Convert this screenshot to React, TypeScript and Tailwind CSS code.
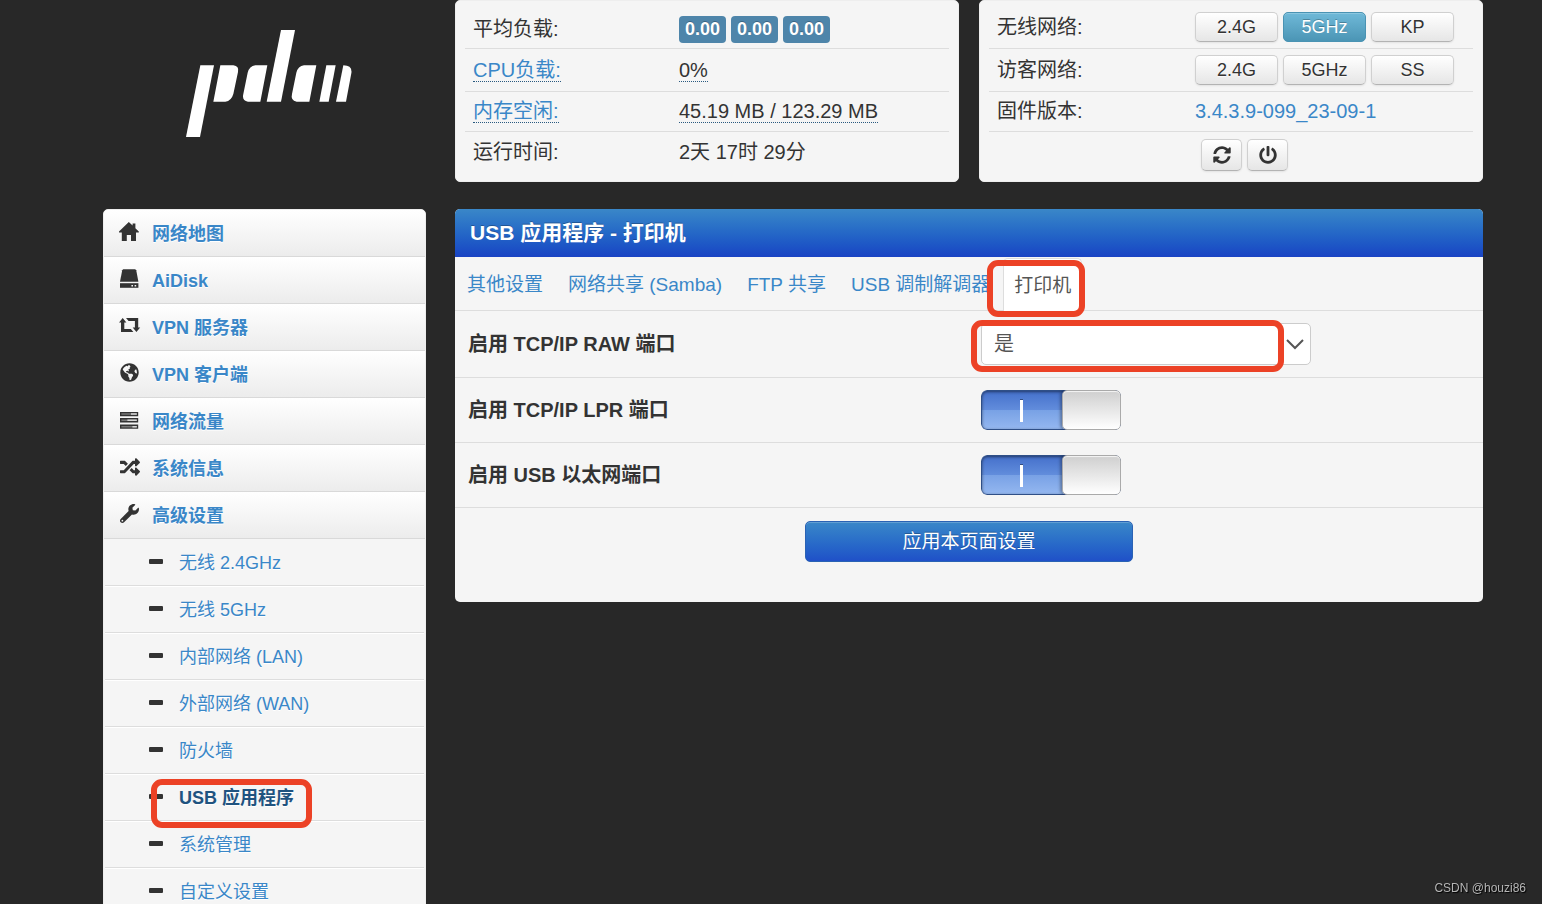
import { useState } from "react"
import type { ReactNode } from "react"
import { FaGlobeAmericas, FaPowerOff, FaRandom, FaSyncAlt, FaWrench } from "react-icons/fa"

interface MenuItem {
  label: string
  icon: ReactNode
}

function HomeIcon() {
  return (
    <svg width="20" height="20" viewBox="0 0 20 20" fill="currentColor">
      <path d="M9.8 0 L13.6 3.6 V1.4 H16.4 V6.2 L19.8 9.6 V10.4 H17 V19 H12 V13 H7.8 V19 H2.8 V10.4 H0 V9.6 Z" />
    </svg>
  )
}

function DiskIcon() {
  return (
    <svg width="20" height="20" viewBox="0 0 20 20" fill="currentColor">
      <path d="M4.2 0.3 H16.2 L17.2 1.2 L19.4 12.8 H1 L3.2 1.2 Z" />
      <path d="M1 14.2 H19.4 V18.8 H1 Z" />
      <path d="M12.4 16 h1.6 v1.4 h-1.6 z M15.6 16 h1.6 v1.4 h-1.6 z" fill="#f5f5f5" />
    </svg>
  )
}

function RetweetIcon() {
  return (
    <svg width="22" height="20" viewBox="0 0 22 20" fill="currentColor">
      <path d="M3.7 2 L7.4 6.6 H5.3 V12.9 H11.8 L14.4 16 H2 V6.6 H0 Z" />
      <path d="M17.4 16 L13.7 11.4 H15.9 V5.1 H9.6 L7 2 H19.2 V11.4 H21.2 Z" />
    </svg>
  )
}

function TasksIcon() {
  return (
    <svg width="20" height="20" viewBox="0 0 20 20">
      <path d="M1 2 H19.2 V6.2 H1 Z M1 8 H19.2 V12.4 H1 Z M1 14.4 H19.2 V18.8 H1 Z" fill="currentColor" />
      <path d="M2.4 3.3 H17.8 V4.8 H2.4 Z M2.4 9.4 H17.8 V10.9 H2.4 Z M2.4 15.9 H17.8 V17.4 H2.4 Z" fill="#777" />
      <path d="M12 3.3 H17.8 V4.8 H12 Z M8.4 9.4 H17.8 V10.9 H8.4 Z M13.4 15.9 H17.8 V17.4 H13.4 Z" fill="#d5d5d5" />
    </svg>
  )
}

function Logo() {
  return (
    <svg className="h-[107px] w-[166px]" viewBox="48 30 498 321" fill="#fff" role="img" aria-label="pdcn">
      <path d="M91 136 H132 L90 351 H48 Z" />
      <path d="M151 136 H190 Q208 138 204 156 L190 222 Q184 243 166 245 H130 Z" />
      <path d="M256 136 H292 L271 245 H234 Q215 241 220 222 L233 158 Q238 139 256 136 Z" />
      <path d="M333 30 H375 L333 245 H290 Z" />
      <path d="M402 136 H439 L418 245 H380 Q361 241 366 222 L379 158 Q384 139 402 136 Z" />
      <path d="M469 136 H497 L476 245 H448 Z" />
      <path d="M520 136 Q548 136 544 160 L528 245 H498 Z" />
    </svg>
  )
}

const menu: MenuItem[] = [
  { label: "网络地图", icon: <HomeIcon /> },
  { label: "AiDisk", icon: <DiskIcon /> },
  { label: "VPN 服务器", icon: <RetweetIcon /> },
  { label: "VPN 客户端", icon: <FaGlobeAmericas className="ml-px size-[19px]" /> },
  { label: "网络流量", icon: <TasksIcon /> },
  { label: "系统信息", icon: <FaRandom className="ml-px size-5" /> },
  { label: "高级设置", icon: <FaWrench className="ml-px size-[19px]" /> },
]

const subMenu = [
  "无线 2.4GHz",
  "无线 5GHz",
  "内部网络 (LAN)",
  "外部网络 (WAN)",
  "防火墙",
  "USB 应用程序",
  "系统管理",
  "自定义设置",
]

const tabs = ["其他设置", "网络共享 (Samba)", "FTP 共享", "USB 调制解调器", "打印机"]

const cardClass = "rounded-[5px] border border-[#eee] bg-[#f5f5f5] px-[9px]"
const labelClass = "pl-2 text-left font-normal"
const buttonClass =
  "rounded-[5px] border border-[#d0d0d0] border-b-[#b3b3b3] bg-linear-to-b from-white to-[#e6e6e6] shadow-[0_1px_2px_rgba(0,0,0,0.08)] [text-shadow:0_1px_1px_rgba(255,255,255,0.75)]"

function RadioButton({ label, active = false }: { label: string; active?: boolean }) {
  return (
    <button
      type="button"
      className={
        active
          ? "h-[30px] w-[83px] rounded-[5px] border border-[#4a93b3] bg-linear-to-b from-[#6fb9d8] to-[#4b95b5] text-lg leading-none text-white shadow-[inset_0_1px_0_rgba(255,255,255,0.2)] [text-shadow:0_-1px_0_rgba(0,0,0,0.25)]"
          : `${buttonClass} h-[30px] w-[83px] text-lg leading-none`
      }
    >
      {label}
    </button>
  )
}

function Toggle({ id }: { id: string }) {
  const [on, setOn] = useState(true)

  return (
    <div className="relative h-10 w-[140px] overflow-hidden rounded-md">
      <input
        id={id}
        type="checkbox"
        checked={on}
        onChange={(e) => setOn(e.target.checked)}
        className="peer block h-10 w-[140px] cursor-pointer appearance-none rounded-md border border-[#999] bg-[#ddd] shadow-[inset_0_1px_3px_rgba(0,0,0,0.5)] checked:border-[#2f4f87] checked:bg-[linear-gradient(#4470cb,#628ddc_50%,#78a1e5_50%,#94b7f0)]"
      />
      <span className="pointer-events-none absolute top-0 left-0 h-10 w-[59px] rounded-[5px] border border-[#aaa] bg-linear-to-b from-[#cfcfcf] to-white shadow-[inset_0_1px_1px_rgba(255,255,255,0.8),-2px_0_3px_rgba(0,0,0,0.3)] peer-checked:left-[81px]"></span>
      {on && <span className="pointer-events-none absolute top-[10px] left-[39px] h-[22px] w-[3px] bg-white shadow-[0_-1px_0_rgba(0,0,0,0.4)]"></span>}
    </div>
  )
}

export default function App() {
  const [rawPort, setRawPort] = useState("1")

  return (
    <div className="h-screen overflow-hidden bg-[#282828] pr-[59px] pl-[103px] font-['Liberation_Sans','Noto_Sans_CJK_SC',sans-serif] text-[20px] leading-6 text-[#333]">
      <div className="grid grid-cols-[323px_minmax(0,1fr)] gap-x-[29px] gap-y-[27px]">
        <div className="flex justify-center pt-[30px] pl-2">
          <Logo />
        </div>

        {/* Router status */}
        <div className="grid grid-cols-2 gap-5">
          <section className={cardClass}>
            <table className="w-full table-fixed">
              <tbody>
                <tr className="h-[47px] border-b border-[#ddd]">
                  <th scope="row" className={`${labelClass} w-[214px] pt-[10px]`}>平均负载:</th>
                  <td className="pt-[10px]">
                    <div className="flex gap-[5px]">
                      {[0, 1, 2].map((i) => (
                        <span
                          key={i}
                          className="w-[47px] rounded-[4px] bg-[#4e85aa] text-center text-lg leading-[27px] font-bold text-white [text-shadow:0_-1px_0_rgba(0,0,0,0.25)]"
                        >
                          0.00
                        </span>
                      ))}
                    </div>
                  </td>
                </tr>
                <tr className="h-[43px] border-b border-[#ddd]">
                  <th scope="row" className={labelClass}>
                    <a href="#cpu" className="border-b border-dotted border-[#2a5a80] text-[#3a87c8]">CPU负载:</a>
                  </th>
                  <td>
                    <span className="border-b border-dotted border-[#2a5a80]">0%</span>
                  </td>
                </tr>
                <tr className="h-10 border-b border-[#ddd]">
                  <th scope="row" className={labelClass}>
                    <a href="#memory" className="border-b border-dotted border-[#2a5a80] text-[#3a87c8]">内存空闲:</a>
                  </th>
                  <td>
                    <span className="border-b border-dotted border-[#2a5a80]">45.19 MB / 123.29 MB</span>
                  </td>
                </tr>
                <tr className="h-[42px]">
                  <th scope="row" className={labelClass}>运行时间:</th>
                  <td>2天 17时 29分</td>
                </tr>
              </tbody>
            </table>
          </section>

          <section className={`${cardClass} h-[182px]`}>
            <table className="w-full table-fixed">
              <tbody>
                <tr className="h-[47px] border-b border-[#ddd]">
                  <th scope="row" className={`${labelClass} w-[206px] pt-[6px]`}>无线网络:</th>
                  <td className="pt-[6px]">
                    <div className="flex gap-[5px]">
                      <RadioButton label="2.4G" />
                      <RadioButton label="5GHz" active />
                      <RadioButton label="KP" />
                    </div>
                  </td>
                </tr>
                <tr className="h-[43px] border-b border-[#ddd]">
                  <th scope="row" className={labelClass}>访客网络:</th>
                  <td>
                    <div className="flex gap-[5px]">
                      <RadioButton label="2.4G" />
                      <RadioButton label="5GHz" />
                      <RadioButton label="SS" />
                    </div>
                  </td>
                </tr>
                <tr className="h-10 border-b border-[#ddd]">
                  <th scope="row" className={labelClass}>固件版本:</th>
                  <td>
                    <a href="#firmware" className="text-[#3a87c8]">3.4.3.9-099_23-09-1</a>
                  </td>
                </tr>
                <tr className="h-[47px]">
                  <td></td>
                  <td>
                    <div className="flex gap-[5px] pl-[6px]">
                      <button type="button" aria-label="刷新" className={`${buttonClass} flex h-8 w-[41px] items-center justify-center`}>
                        <FaSyncAlt className="size-[18px]" />
                      </button>
                      <button type="button" aria-label="重启" className={`${buttonClass} flex h-8 w-[41px] items-center justify-center`}>
                        <FaPowerOff className="size-[18px]" />
                      </button>
                    </div>
                  </td>
                </tr>
              </tbody>
            </table>
          </section>
        </div>

        {/* Side menu */}
        <nav className="self-start overflow-hidden rounded-[5px] border border-[#eee] bg-[#f5f5f5] text-lg [text-shadow:0_1px_0_#fff]">
          <ul>
            {menu.map((item) => (
              <li key={item.label}>
                <a
                  href="#menu"
                  className="flex h-[47px] items-center gap-[11px] border-b border-[#d9d9d9] bg-linear-to-b from-white to-[#ececec] pl-[15px] font-bold text-[#3a87c8]"
                >
                  <span className="w-[22px] pb-[3px] text-[#333]">{item.icon}</span>
                  <span className="pt-[2px]">{item.label}</span>
                </a>
              </li>
            ))}
          </ul>
          <ul className="px-px">
            {subMenu.map((label) => (
              <li key={label} className="relative">
                <a
                  href="#submenu"
                  className={`flex h-[47px] items-center gap-4 border-b border-[#ddd] pl-11 shadow-[0_1px_0_#fff] ${
                    label === "USB 应用程序" ? "font-bold text-[#1f5380]" : "text-[#3a87c8]"
                  }`}
                >
                  <span className="mb-px h-[5px] w-[14px] rounded-[1px] bg-[#333]"></span>
                  <span className="pt-[2px]">{label}</span>
                </a>
                {label === "USB 应用程序" && (
                  <span className="pointer-events-none absolute top-[5px] left-[46px] z-10 h-[49px] w-[161px] rounded-[11px] border-6 border-[#ec4226]"></span>
                )}
              </li>
            ))}
          </ul>
        </nav>

        {/* USB printer settings */}
        <main className="self-start rounded-[5px] bg-[#f5f5f5]">
          <h1 className="h-12 rounded-t-[5px] bg-linear-to-b from-[#3a87c8] to-[#1a43c4] pl-[15px] text-[21px] leading-[48px] font-bold text-white [text-shadow:0_-1px_0_rgba(0,0,0,0.25)]">
            USB 应用程序 - 打印机
          </h1>

          <ul className="flex h-[54px] gap-px border-b border-[#ddd] pt-px text-[19px]">
            {tabs.map((tab) => (
              <li key={tab} className="relative">
                {tab === "打印机" ? (
                  <>
                    <a
                      href="#printer"
                      className="block h-[53px] rounded-t-[5px] border border-b-0 border-[#ddd] bg-white px-[10px] leading-[54px] whitespace-nowrap text-[#555]"
                    >
                      {tab}
                    </a>
                    <span className="pointer-events-none absolute top-[2px] -left-4 h-[57px] w-[98px] rounded-[11px] border-6 border-[#ec4226]"></span>
                  </>
                ) : (
                  <a href="#tab" className="block px-3 leading-[54px] whitespace-nowrap text-[#3a87c8]">
                    {tab}
                  </a>
                )}
              </li>
            ))}
          </ul>

          <form onSubmit={(e) => e.preventDefault()}>
            <div className="grid grid-cols-2 items-center border-b border-[#ddd] py-3">
              <label htmlFor="raw" className="pl-[13px] font-bold">启用 TCP/IP RAW 端口</label>
              <div className="relative ml-3 w-[330px]">
                <select
                  id="raw"
                  value={rawPort}
                  onChange={(e) => setRawPort(e.target.value)}
                  className="block h-[42px] w-full appearance-none rounded-[5px] border border-[#ccc] bg-white pl-3 text-[#555]"
                >
                  <option value="1">是</option>
                  <option value="0">否</option>
                </select>
                <svg className="pointer-events-none absolute top-4 right-[7px]" width="18" height="11" viewBox="0 0 18 11" fill="none" stroke="#555" strokeWidth="2">
                  <path d="M1 1 L9 9 L17 1" />
                </svg>
                <span className="pointer-events-none absolute -top-[3px] -left-[10px] h-[52px] w-[313px] rounded-[11px] border-6 border-[#ec4226]"></span>
              </div>
            </div>
            <div className="grid grid-cols-2 items-center border-b border-[#ddd] py-3">
              <label htmlFor="lpr" className="pl-[13px] font-bold">启用 TCP/IP LPR 端口</label>
              <div className="pl-3">
                <Toggle id="lpr" />
              </div>
            </div>
            <div className="grid grid-cols-2 items-center border-b border-[#ddd] py-3">
              <label htmlFor="ethernet" className="pl-[13px] font-bold">启用 USB 以太网端口</label>
              <div className="pl-3">
                <Toggle id="ethernet" />
              </div>
            </div>
            <div className="flex justify-center pt-[13px] pb-10">
              <button
                type="submit"
                className="h-[41px] w-[328px] rounded-[5px] border border-[#2a62b4] bg-linear-to-b from-[#3a87c8] to-[#2050c8] text-[19px] text-white shadow-[inset_0_1px_0_rgba(255,255,255,0.2)] [text-shadow:0_-1px_0_rgba(0,0,0,0.25)]"
              >
                应用本页面设置
              </button>
            </div>
          </form>
        </main>
      </div>

      <footer className="fixed right-4 bottom-2 text-xs leading-4 text-[#b5b5b5] [text-shadow:1px_1px_1px_#000]">CSDN @houzi86</footer>
    </div>
  )
}
